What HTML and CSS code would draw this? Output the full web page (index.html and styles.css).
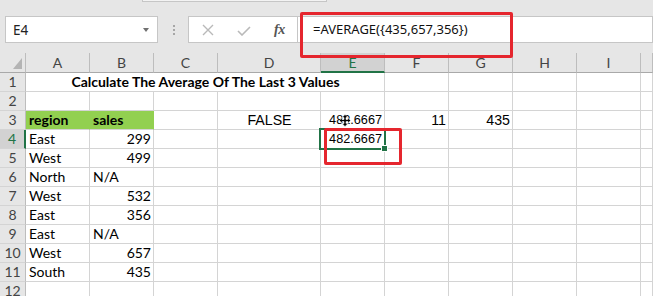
FILE: index.html
```html
<!DOCTYPE html>
<html>
<head>
<meta charset="utf-8">
<link rel="stylesheet" href="styles.css">
</head>
<body>
<div class="app">
  <div class="ribbon-edge"><div class="ribbon-tab"></div></div>
  <div class="formula-bar">
    <div class="name-box"><span class="name-text">E4</span><span class="name-arrow"></span></div>
    <div class="grip"><i></i><i></i><i></i></div>
    <div class="fx-buttons">
      <svg class="btn-cancel" width="12" height="12" viewBox="0 0 12 12"><path d="M1 1L11 11M11 1L1 11" stroke="#b9b9b9" stroke-width="1.4" fill="none"/></svg>
      <svg class="btn-check" width="14" height="10" viewBox="0 0 14 10"><path d="M1 5L5 9L13 1" stroke="#b9b9b9" stroke-width="1.6" fill="none"/></svg>
      <span class="fx">fx</span>
    </div>
    <div class="formula-input">=AVERAGE({435,657,356})</div>
  </div>

  <div class="sheet">
    <div class="h corner"><span class="tri"></span></div>
    <div class="h">A</div><div class="h">B</div><div class="h">C</div><div class="h">D</div>
    <div class="h h-sel">E</div><div class="h">F</div><div class="h">G</div><div class="h">H</div><div class="h">I</div><div class="h"></div>

    <div class="rh">1</div>
    <div class="c title">Calculate The Average Of The Last 3 Values</div>
    <div class="c"></div><div class="c"></div><div class="c"></div><div class="c"></div><div class="c"></div>

    <div class="rh">2</div>
    <div class="c"></div><div class="c"></div><div class="c"></div><div class="c"></div><div class="c"></div><div class="c"></div><div class="c"></div><div class="c"></div><div class="c"></div><div class="c"></div>

    <div class="rh">3</div>
    <div class="c b fill">region</div><div class="c b fill">sales</div><div class="c"></div>
    <div class="c ar ctr big">FALSE</div>
    <div class="c ar r sm cur-cell">482.6667<svg class="cursor" width="12" height="13" viewBox="0 0 12 13"><path d="M6 0.5L9 3.5H7V5.5H9V3.5L11.5 6.5L9 9.5V7.5H7V9.5H9L6 12.5L3 9.5H5V7.5H3V9.5L0.5 6.5L3 3.5V5.5H5V3.5H3Z" fill="#000" stroke="#fff" stroke-width="0.6"/></svg></div>
    <div class="c ar r big">11</div><div class="c ar r big">435</div>
    <div class="c"></div><div class="c"></div><div class="c"></div>

    <div class="rh rh-sel">4</div>
    <div class="c">East</div><div class="c r">299</div><div class="c"></div><div class="c"></div>
    <div class="c ar r sm active">482.6667<span class="sel"></span><span class="handle"></span></div>
    <div class="c"></div><div class="c"></div><div class="c"></div><div class="c"></div><div class="c"></div>

    <div class="rh">5</div>
    <div class="c">West</div><div class="c r">499</div><div class="c"></div><div class="c"></div><div class="c"></div><div class="c"></div><div class="c"></div><div class="c"></div><div class="c"></div><div class="c"></div>

    <div class="rh">6</div>
    <div class="c">North</div><div class="c">N/A</div><div class="c"></div><div class="c"></div><div class="c"></div><div class="c"></div><div class="c"></div><div class="c"></div><div class="c"></div><div class="c"></div>

    <div class="rh">7</div>
    <div class="c">West</div><div class="c r">532</div><div class="c"></div><div class="c"></div><div class="c"></div><div class="c"></div><div class="c"></div><div class="c"></div><div class="c"></div><div class="c"></div>

    <div class="rh">8</div>
    <div class="c">East</div><div class="c r">356</div><div class="c"></div><div class="c"></div><div class="c"></div><div class="c"></div><div class="c"></div><div class="c"></div><div class="c"></div><div class="c"></div>

    <div class="rh">9</div>
    <div class="c">East</div><div class="c">N/A</div><div class="c"></div><div class="c"></div><div class="c"></div><div class="c"></div><div class="c"></div><div class="c"></div><div class="c"></div><div class="c"></div>

    <div class="rh">10</div>
    <div class="c">West</div><div class="c r">657</div><div class="c"></div><div class="c"></div><div class="c"></div><div class="c"></div><div class="c"></div><div class="c"></div><div class="c"></div><div class="c"></div>

    <div class="rh">11</div>
    <div class="c">South</div><div class="c r">435</div><div class="c"></div><div class="c"></div><div class="c"></div><div class="c"></div><div class="c"></div><div class="c"></div><div class="c"></div><div class="c"></div>

    <div class="rh">12</div>
    <div class="c"></div><div class="c"></div><div class="c"></div><div class="c"></div><div class="c"></div><div class="c"></div><div class="c"></div><div class="c"></div><div class="c"></div><div class="c"></div>
  </div>

  <div class="callout callout-formula"></div>
  <div class="callout callout-cell"></div>
</div>
</body>
</html>
```

FILE: styles.css
```css
html, body {
  margin: 0;
  padding: 0;
}
body {
  width: 653px;
  height: 296px;
  overflow: hidden;
  background: #e6e6e6;
}
.app {
  position: relative;
  width: 653px;
  height: 296px;
  overflow: hidden;
  background: #e6e6e6;
  font-family: "Lato", "Liberation Sans", sans-serif;
}

/* ribbon bottom edge */
.ribbon-edge {
  height: 2px;
}
.ribbon-tab {
  margin-left: 142px;
  width: 183px;
  height: 1px;
  background: #f3f3f3;
  border: 1px solid #c6c6c6;
  border-top: none;
}

/* formula bar */
.formula-bar {
  display: flex;
  align-items: stretch;
  height: 27px;
  margin-top: 14px;
}
.name-box {
  box-sizing: border-box;
  margin-left: 5px;
  width: 153px;
  background: #fff;
  border: 1px solid #c6c6c6;
  display: flex;
  align-items: center;
  justify-content: space-between;
  padding: 0 8px 0 7px;
}
.name-text {
  font-family: "Noto Sans", "Open Sans", sans-serif;
  font-size: 13.5px;
  color: #222;
}
.name-arrow {
  width: 0;
  height: 0;
  border-left: 3.5px solid transparent;
  border-right: 3.5px solid transparent;
  border-top: 4px solid #707070;
}
.grip {
  margin-left: 15px;
  width: 2px;
  display: flex;
  flex-direction: column;
  justify-content: center;
  gap: 2px;
}
.grip i {
  display: block;
  width: 2px;
  height: 2px;
  background: #a6a6a6;
}
.fx-buttons {
  box-sizing: border-box;
  margin-left: 13px;
  width: 110px;
  background: #fff;
  border: 1px solid #c6c6c6;
  display: flex;
  align-items: center;
  padding-left: 13px;
}
.btn-cancel {
  margin-top: 1px;
}
.btn-check {
  margin-left: 23px;
  margin-top: 3px;
}
.fx {
  margin-left: 23px;
  font-family: "Liberation Serif", "DejaVu Serif", serif;
  font-style: italic;
  font-weight: bold;
  font-size: 14px;
  color: #555;
  letter-spacing: -0.5px;
}
.formula-input {
  flex: 1;
  box-sizing: border-box;
  background: #fff;
  border: 1px solid #c6c6c6;
  border-left: none;
  padding-left: 15px;
  font-family: "Noto Sans", "Open Sans", sans-serif;
  font-size: 13px;
  line-height: 25px;
  color: #111;
  white-space: nowrap;
}

/* sheet grid */
.sheet {
  margin-top: 10px;
  display: grid;
  grid-template-columns: 26px 64px 64px 64px 103px 64px 64px 64px 64px 64px 1fr;
  grid-template-rows: 20px;
  grid-auto-rows: 19px;
  background: #fff;
}
.h {
  box-sizing: border-box;
  background: #e6e6e6;
  border-right: 1px solid #bdbdbd;
  border-bottom: 1px solid #a9a9a9;
  text-align: center;
  font-size: 14px;
  line-height: 19px;
  color: #444;
}
.corner {
  position: relative;
}
.tri {
  position: absolute;
  right: 3px;
  bottom: 3px;
  width: 0;
  height: 0;
  border-left: 9px solid transparent;
  border-bottom: 11px solid #b4b4b4;
}
.h-sel {
  background: #d2d2d2;
  color: #217346;
  border-bottom: 2px solid #217346;
}
.rh {
  box-sizing: border-box;
  background: #e6e6e6;
  border-right: 1px solid #bdbdbd;
  border-bottom: 1px solid #d4d4d4;
  text-align: center;
  font-size: 14px;
  line-height: 18px;
  color: #444;
}
.rh-sel {
  background: #d2d2d2;
  color: #217346;
  border-right: 2px solid #217346;
}
.c {
  box-sizing: border-box;
  border-right: 1px solid #d4d4d4;
  border-bottom: 1px solid #d4d4d4;
  padding: 0 2px 0 3px;
  font-size: 14px;
  line-height: 18px;
  color: #000;
  white-space: nowrap;
}
.title {
  grid-column: 2 / 7;
  text-align: center;
  font-weight: bold;
}
.b {
  font-weight: bold;
}
.fill {
  background: #92d050;
  border-right-color: #92d050;
}
.r {
  text-align: right;
}
.ctr {
  text-align: center;
}
.ar {
  font-family: "Liberation Sans", "Arial", sans-serif;
  line-height: 19px;
}
.big {
  font-size: 14.2px;
}
.sm {
  font-size: 12.7px;
}
.cur-cell {
  position: relative;
}
.cursor {
  position: absolute;
  left: 18px;
  top: 3px;
}
.active {
  position: relative;
}
.sel {
  position: absolute;
  left: -2px;
  top: -2px;
  width: 67px;
  height: 22px;
  box-sizing: border-box;
  border: 2px solid #217346;
}
.handle {
  position: absolute;
  left: 60px;
  top: 15px;
  width: 5px;
  height: 5px;
  background: #217346;
  border: 1px solid #fff;
}

/* red callouts */
.callout {
  position: absolute;
  box-sizing: border-box;
  border: 3px solid #e5262e;
  border-radius: 2px;
}
.callout-formula {
  left: 300px;
  top: 12px;
  width: 213px;
  height: 46px;
}
.callout-cell {
  left: 324px;
  top: 128px;
  width: 78px;
  height: 37px;
}
```
